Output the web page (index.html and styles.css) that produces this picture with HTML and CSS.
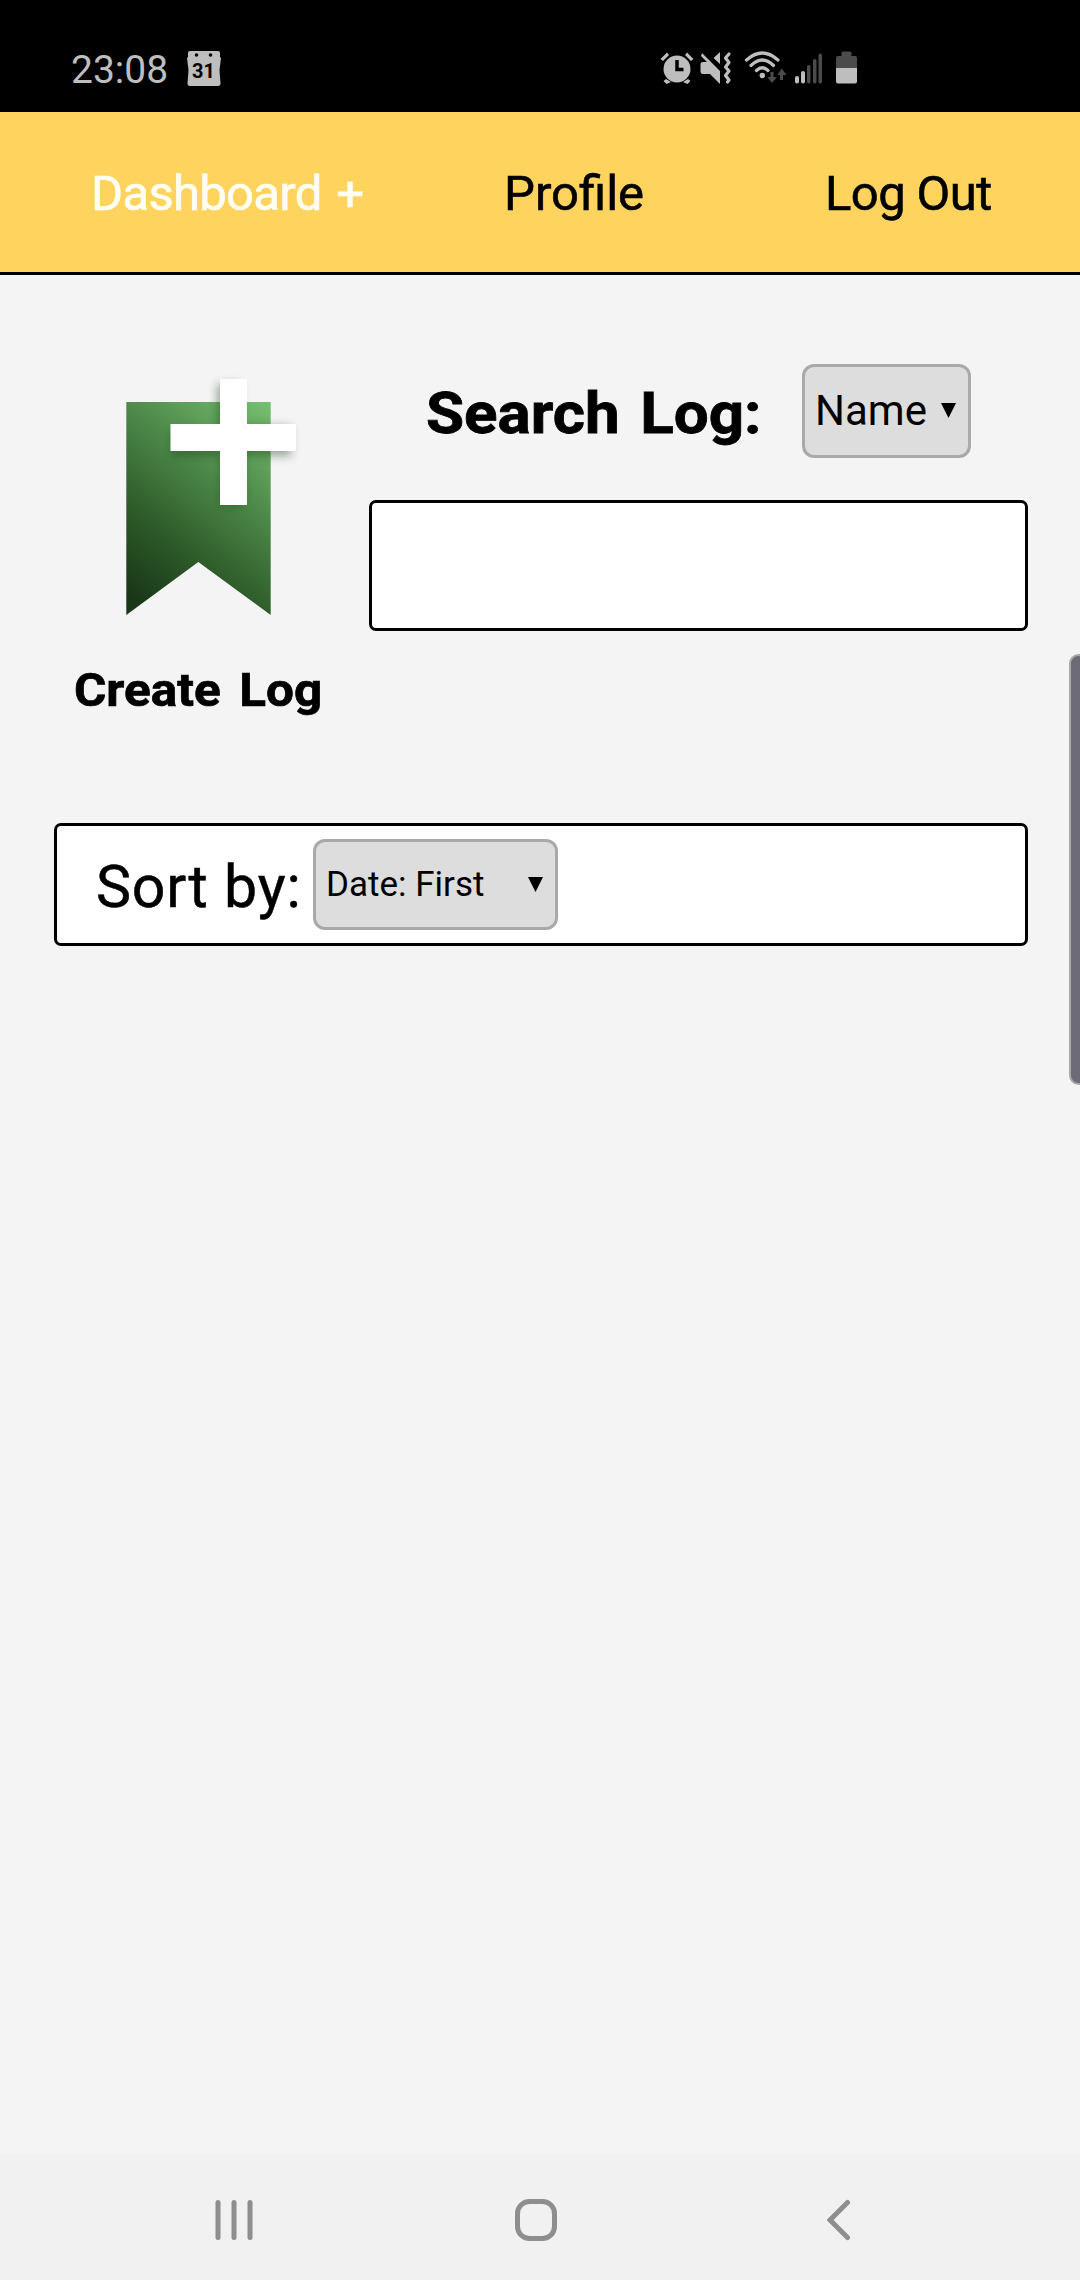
FILE: index.html
```html
<!DOCTYPE html>
<html lang="en">
<head>
<meta charset="utf-8">
<title>Dashboard</title>
<link rel="stylesheet" href="styles.css">
</head>
<body>
<header class="status">
  <span class="clock">23:08</span>
  <svg class="calendar" width="34" height="35" viewBox="0 0 34 35">
    <path fill="#bebebe" d="M3 0H31Q33 0 33 2V6L34 7L32.500 19L33.500 33Q33.500 35 31 35H3Q.5 35 .5 33L1.500 19L0 7L1 6V2Q1 0 3 0Z"/>
    <circle cx="9.500" cy="4" r="1.800"/><circle cx="23.500" cy="4" r="1.800"/>
    <text x="16.500" y="27" text-anchor="middle" class="day">31</text>
  </svg>
  <svg class="system" width="200" height="36" viewBox="660 50 200 36">
    <g fill="#bebebe">
      <circle cx="677" cy="69" r="13.500"/>
      <path d="M660.500 59L667 52.500L669 55L663 61ZM693.500 59L687 52.500L685 55L691 61Z"/>
      <path d="M666 79L671 82L666.500 84L663.500 81ZM688 79L683 82L687.500 84L690.500 81Z"/>
      <path d="M702 53L720 71V84L710 74H703Q700.500 74 700.500 71V64Q700.500 62 703 62H707L701 56ZM720 52V64L713.500 58Z"/>
      <circle cx="762.300" cy="75.500" r="2.700"/>
      <rect x="795" y="76" width="4" height="7.500" rx="2"/><rect x="801" y="71" width="4" height="12.500" rx="2"/>
      <path d="M836 68H857V81.500Q857 83.500 855 83.500H838Q836 83.500 836 81.500Z"/>
    </g>
    <path d="M677 60V69.500H683.500" fill="none" stroke="#000" stroke-width="3.500"/>
    <g fill="none" stroke="#bebebe" stroke-width="3.200" stroke-linecap="round">
      <path d="M729 54L725.500 58L729 62.500L725.500 67L729 71L725.500 75.500L729 80L727.500 82" stroke-linejoin="round"/>
      <path d="M746.500 60Q762.300 46 778 60M751 65.500Q762.300 54.500 773.500 65.500M756.500 70.500Q762.300 65 768 70.500"/>
    </g>
    <g fill="#4b4b4b">
      <path d="M770.500 72H773.500V77H777L772 83L767.500 77H770.500ZM780 80H783V75H786.500L781.700 68.500L777.500 75H780Z"/>
      <rect x="807" y="65" width="3.500" height="18.500" rx="1.700"/><rect x="813" y="59" width="3.500" height="24.500" rx="1.700"/><rect x="818.500" y="53.500" width="3.500" height="30" rx="1.700"/>
      <path d="M836 68V58Q836 56 838 56H841.500V53Q841.500 51.500 843 51.500H850Q851.500 51.500 851.500 53V56H855Q857 56 857 58V68Z"/>
    </g>
  </svg>
</header>
<nav class="menu">
  <a class="item active">Dashboard +</a>
  <a class="item profile">Profile</a>
  <a class="item logout">Log Out</a>
</nav>
<main class="content">
  <section class="top">
    <div class="create">
      <svg class="bookmark" width="190" height="260" viewBox="106 365 190 260" overflow="visible">
        <defs>
          <linearGradient id="green" gradientUnits="userSpaceOnUse" x1="125" y1="590" x2="272" y2="405">
            <stop offset="0" stop-color="#1a3818"/><stop offset=".28" stop-color="#2d5a29"/><stop offset=".62" stop-color="#4e8a4a"/><stop offset="1" stop-color="#77bf70"/>
          </linearGradient>
          <filter id="shadow" x="-30%" y="-30%" width="160%" height="160%"><feGaussianBlur stdDeviation="5"/></filter>
        </defs>
        <path d="M126.300 402H270.700V615L198.300 562L126.300 615Z" fill="url(#green)"/>
        <path d="M217 384H240V426H291V456H243V506H220V456H172V430H217Z" fill="#173c14" opacity=".42" filter="url(#shadow)"/>
        <path d="M220 379H247V424H296V451H247V505H220V451H170.500V424H220Z" fill="#fff"/>
      </svg>
      <h2 class="create-label">Create Log</h2>
    </div>
    <div class="search">
      <div class="search-row">
        <h1 class="search-label">Search Log:</h1>
        <div class="select name"><span class="name-text">Name</span><svg width="15" height="15" viewBox="0 0 15 15"><path d="M0 0H15L7.500 15Z"/></svg></div>
      </div>
      <div class="field"></div>
    </div>
  </section>
  <section class="sort">
    <span class="sort-label">Sort by:</span>
    <div class="select date"><span class="date-text">Date: First</span><svg width="15" height="15" viewBox="0 0 15 15"><path d="M0 0H15L7.500 15Z"/></svg></div>
  </section>
</main>
<footer class="keys">
  <svg width="38" height="42" viewBox="215 2199 38 42" stroke="#8e8e8e" stroke-width="5" stroke-linecap="round"><path d="M218 2202.500V2237.500M234 2202.500V2237.500M250 2202.500V2237.500"/></svg>
  <svg class="home" width="42" height="42" viewBox="0 0 42 42"><rect x="2.500" y="2.500" width="37" height="37" rx="12" fill="none" stroke="#8e8e8e" stroke-width="5"/></svg>
  <svg width="24" height="42" viewBox="827 2199 24 42"><path d="M847.500 2202.500L830 2220L847.500 2237.500" fill="none" stroke="#8e8e8e" stroke-width="5" stroke-linecap="round"/></svg>
</footer>
<div class="edge-handle"></div>
</body>
</html>
```
FILE: styles.css
```css
* { box-sizing: border-box; }
body {
  margin: 0;
  width: 1080px;
  height: 2280px;
  display: flex;
  flex-direction: column;
  position: relative;
  overflow: hidden;
  background: #f4f4f4;
  color: #000;
  font-family: Roboto, "Noto Sans", sans-serif;
}
svg { display: block; flex: none; }
h1, h2 { margin: 0; }
.status {
  height: 112px;
  padding: 50px 0 0 71px;
  display: flex;
  align-items: flex-start;
  background: #000;
}
.clock {
  width: 116px;
  font-size: 39px;
  line-height: 40px;
  color: #bebebe;
}
.calendar { margin-top: 1px; }
.day { font-size: 20px; font-weight: 700; }
.system { margin-left: 439px; }
.menu {
  height: 163px;
  padding: 3px 0 0 91px;
  display: flex;
  align-items: center;
  background: #ffd45e;
  border-bottom: 3px solid #000;
}
.item {
  flex: none;
  font-size: 49px;
  line-height: 60px;
  white-space: nowrap;
  -webkit-text-stroke: 0.6px currentColor;
}
.active { width: 413px; color: #fffff5; letter-spacing: -0.7px; word-spacing: 3px; }
.profile { width: 321px; }
.logout { letter-spacing: -0.6px; }
.content {
  flex: 1;
  padding: 89px 52px 0 54px;
}
.top { display: flex; height: 459px; }
.create { width: 315px; }
.bookmark { margin: 1px 0 0 52px; }
.create-label {
  width: 230px;
  margin: 37px 0 0 20px;
  font-size: 46px;
  line-height: 56px;
  word-spacing: 6px;
  white-space: nowrap;
  transform: scaleX(1.075);
  transform-origin: left;
  -webkit-text-stroke: 0.7px currentColor;
}
.search { width: 659px; }
.search-row {
  display: flex;
  height: 94px;
  padding-left: 57px;
}
.search-label {
  width: 376px;
  font-size: 58px;
  line-height: 98px;
  word-spacing: 5px;
  white-space: nowrap;
  transform: scaleX(1.067);
  transform-origin: left;
  -webkit-text-stroke: 0.8px currentColor;
}
.select {
  display: flex;
  align-items: center;
  justify-content: space-between;
  padding: 0 12px 0 10px;
  border: 3px solid #a9a9a9;
  border-radius: 12px;
  background: #ddd;
  white-space: nowrap;
}
.name { width: 169px; height: 94px; padding-bottom: 2px; }
.name-text { font-size: 42px; }
.field {
  height: 131px;
  margin-top: 42px;
  border: 3px solid #000;
  border-radius: 7px;
  background: #fff;
}
.sort {
  height: 123px;
  display: flex;
  align-items: center;
  padding-left: 39px;
  border: 3px solid #000;
  border-radius: 7px;
  background: #fff;
}
.sort-label {
  width: 217px;
  font-size: 59px;
  line-height: 80px;
  padding-top: 4px;
  letter-spacing: 0.8px;
  white-space: nowrap;
  -webkit-text-stroke: 0.5px currentColor;
}
.date { width: 245px; height: 91px; }
.date-text { font-size: 35px; }
.keys {
  height: 126px;
  padding: 6px 229px 0 215px;
  display: flex;
  align-items: center;
  background: #f1f1f1;
}
.home { margin: 0 270px 0 262px; }
.edge-handle {
  position: absolute;
  right: -8px;
  top: 654px;
  width: 19px;
  height: 431px;
  border: 2px solid #a9a9ab;
  border-radius: 14px;
  background: #6d6b78;
}
```
